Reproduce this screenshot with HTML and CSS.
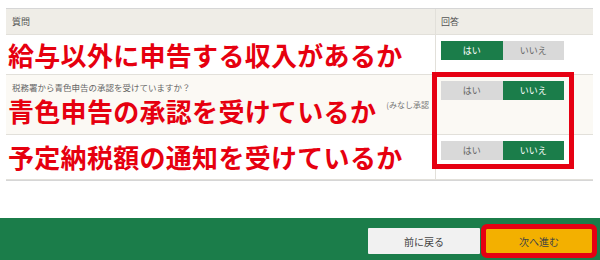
FILE: index.html
```html
<!DOCTYPE html>
<html lang="ja">
<head>
    <meta charset="UTF-8">
    <title>収入等に関する質問</title>
    <link rel="stylesheet" href="styles.css">
</head>
<body>

    <!-- 質問テーブル -->
    <div class="question-table">
        <div class="row head">
            <div class="cell q">質問</div>
            <div class="cell a">回答</div>
        </div>

        <div class="row row1">
            <div class="cell q">
                <div class="big-text">給与以外に申告する収入があるか</div>
            </div>
            <div class="cell a">
                <div class="yes-no">
                    <span class="btn on">はい</span>
                    <span class="btn">いいえ</span>
                </div>
            </div>
        </div>

        <div class="row row2 tint">
            <div class="cell q">
                <div class="small-text">税務署から青色申告の承認を受けていますか？</div>
                <div class="line">
                    <div class="big-text">青色申告の承認を受けているか</div>
                    <span class="note">(みなし承認</span>
                </div>
            </div>
            <div class="cell a">
                <div class="yes-no">
                    <span class="btn">はい</span>
                    <span class="btn on">いいえ</span>
                </div>
            </div>
        </div>

        <div class="row row3">
            <div class="cell q">
                <div class="big-text">予定納税額の通知を受けているか</div>
            </div>
            <div class="cell a">
                <div class="yes-no">
                    <span class="btn">はい</span>
                    <span class="btn on">いいえ</span>
                </div>
            </div>
        </div>

        <!-- 注目の赤枠 -->
        <div class="mark-box"></div>
    </div>

    <!-- 画面下部のナビ -->
    <div class="nav-bar">
        <button class="nav-btn back">前に戻る</button>
        <button class="nav-btn next">次へ進む</button>
    </div>

</body>
</html>
```

FILE: styles.css
```css
body {
    margin: 0;
    font-family: "Noto Sans CJK JP", "Noto Sans", sans-serif;
    color: #555;
    background: #fff;
}

.question-table {
    position: relative;
    margin: 8px 7px 0 6px;
    border-top: 1px solid #d6d6d6;
    border-bottom: 1px solid #d6d6d6;
}

.row {
    display: grid;
    grid-template-columns: 429px 1fr;
    border-bottom: 1px solid #e2e0da;
}
.row:last-of-type {
    border-bottom: none;
}

.cell.a {
    border-left: 1px solid #e2e0da;
    padding-left: 5px;
}

.head {
    height: 25px;
    background-color: #efede7;
    font-size: 9px;
    line-height: 25px;
}
.head .q {
    padding-left: 6px;
}

.tint {
    background-color: #fbf9f4;
}

.row1 { height: 39px; }
.row2 { height: 59px; }
.row3 { height: 44px; }

.row1 .q,
.row3 .q {
    display: flex;
    align-items: center;
}

.big-text {
    padding-left: 2px;
    font-size: 26px;
    font-weight: bold;
    line-height: 28px;
    color: #e6000f;
    letter-spacing: 0.3px;
}

.small-text {
    padding: 6px 0 0 6px;
    font-size: 8.5px;
    line-height: 12px;
    color: #666;
}

.line {
    display: flex;
    align-items: flex-start;
    margin-top: 4px;
}
.line .note {
    margin: 2px 0 0 10px;
    font-size: 8px;
    line-height: 12px;
    color: #777;
}

.yes-no {
    display: flex;
    width: 123px;
    margin-top: 6px;
}

.btn {
    flex: 1;
    height: 19px;
    line-height: 19px;
    text-align: center;
    font-size: 9px;
    background-color: #d9d9d9;
    color: #666;
}
.btn.on {
    background-color: #1b7d4a;
    color: #fff;
}

.mark-box {
    position: absolute;
    left: 426px;
    top: 63px;
    width: 132px;
    height: 87px;
    border: 5px solid #e60012;
}

.nav-bar {
    display: flex;
    justify-content: flex-end;
    gap: 6px;
    margin-top: 37px;
    height: 33px;
    padding: 10px 8px 0 0;
    background-color: #1b7d4a;
}

.nav-btn {
    width: 112px;
    height: 26px;
    border: none;
    border-radius: 1px;
    font-family: "Noto Sans CJK JP", sans-serif;
    font-size: 10px;
    color: #444;
    background-color: #f1f1f1;
}

.nav-btn.next {
    width: 106px;
    margin-top: 1px;
    height: 24px;
    background-color: #f3b000;
    outline: 5px solid #e60012;
}
```
